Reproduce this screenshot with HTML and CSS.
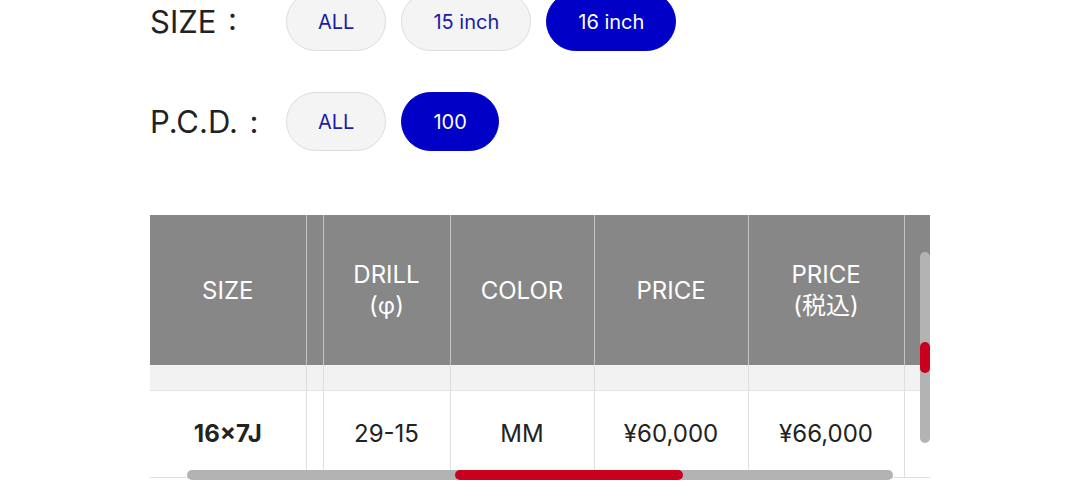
FILE: index.html
```html
<!DOCTYPE html>
<html>
<head>
    <meta charset="UTF-8">
    <title>Wheel Size List</title>
    <link rel="stylesheet" href="styles.css">
</head>
<body>
    <div class="page">
        <!-- Filters -->
        <div class="filters">
            <div class="filter-row">
                <span class="filter-label">SIZE :</span>
                <div class="pills">
                    <button class="pill">ALL</button>
                    <button class="pill">15 inch</button>
                    <button class="pill active">16 inch</button>
                </div>
            </div>
            <div class="filter-row">
                <span class="filter-label">P.C.D. :</span>
                <div class="pills">
                    <button class="pill">ALL</button>
                    <button class="pill active">100</button>
                </div>
            </div>
        </div>

        <!-- Spec table -->
        <div class="table-wrap">
            <table class="spec-table">
                <colgroup>
                    <col class="c-size">
                    <col class="c-gap">
                    <col class="c-drill">
                    <col class="c-color">
                    <col class="c-price">
                    <col class="c-tax">
                    <col class="c-more">
                </colgroup>
                <thead>
                    <tr>
                        <th>SIZE</th>
                        <th></th>
                        <th>DRILL<br>(φ)</th>
                        <th>COLOR</th>
                        <th>PRICE</th>
                        <th>PRICE<br>(税込)</th>
                        <th></th>
                    </tr>
                </thead>
                <tbody>
                    <tr class="spacer-row">
                        <td></td><td></td><td></td><td></td><td></td><td></td><td></td>
                    </tr>
                    <tr class="data-row">
                        <td class="size">16×7J</td>
                        <td></td>
                        <td>29-15</td>
                        <td>MM</td>
                        <td>¥60,000</td>
                        <td>¥66,000</td>
                        <td></td>
                    </tr>
                </tbody>
            </table>
            <!-- scrollbars drawn over the table -->
            <div class="scroll-x"><div class="thumb-x"></div></div>
            <div class="scroll-y"><div class="thumb-y"></div></div>
        </div>
    </div>
</body>
</html>
```

FILE: styles.css
```css
body {
    margin: 0;
    background-color: #fff;
    font-family: Inter, "Noto Sans CJK JP", sans-serif;
    overflow: hidden;
}

.page {
    padding-left: 150px;
    margin-top: -8px;
}

.filters {
    display: flex;
    flex-direction: column;
    gap: 41px;
}

.filter-row {
    display: flex;
    align-items: center;
    height: 59px;
}

.filter-label {
    width: 136px;
    font-size: 31px;
    word-spacing: 3px;
    color: #222;
}

.pills {
    display: flex;
    gap: 15px;
}

.pill {
    height: 59px;
    padding: 0 31px;
    border: 1px solid #dcdcdc;
    border-radius: 30px;
    background-color: #f4f4f4;
    color: #1c1ca6;
    font-family: Inter, sans-serif;
    font-size: 20px;
}

.pill.active {
    background-color: #0000c6;
    border-color: #0000c6;
    color: #fff;
}

/* Table */
.table-wrap {
    position: relative;
    width: 780px;
    height: 270px;
    margin-top: 64px;
    overflow: hidden;
}

.spec-table {
    border-collapse: collapse;
    table-layout: fixed;
    width: 814px;
}

.c-size { width: 156px; }
.c-gap { width: 17px; }
.c-drill { width: 127px; }
.c-color { width: 144px; }
.c-price { width: 154px; }
.c-tax { width: 156px; }
.c-more { width: 60px; }

.spec-table th {
    height: 150px;
    padding: 0;
    background-color: #878787;
    color: #fff;
    font-weight: 400;
    font-size: 24px;
    line-height: 31px;
    border-left: 1px solid #c4c4c4;
}

.spec-table th:first-child,
.spec-table td:first-child {
    border-left: none;
}

.spec-table td {
    padding: 0;
    text-align: center;
    font-size: 24px;
    color: #222;
    border-left: 1px solid #dedede;
}

.spacer-row td {
    height: 25px;
    background-color: #f2f2f2;
    border-bottom: 1px solid #e2e2e2;
}

.data-row td {
    height: 84px;
    padding-bottom: 2px;
    border-bottom: 1px solid #dedede;
}

.data-row td.size {
    font-weight: 700;
}

/* Scrollbars */
.scroll-x {
    position: absolute;
    left: 37px;
    top: 255px;
    width: 706px;
    height: 10px;
    border-radius: 5px;
    background-color: #b3b3b3;
}

.thumb-x {
    margin-left: 268px;
    width: 228px;
    height: 10px;
    border-radius: 5px;
    background-color: #c8001e;
}

.scroll-y {
    position: absolute;
    left: 770px;
    top: 37px;
    width: 10px;
    height: 191px;
    border-radius: 5px;
    background-color: #b3b3b3;
}

.thumb-y {
    margin-top: 90px;
    width: 10px;
    height: 31px;
    border-radius: 5px;
    background-color: #c8001e;
}
```
